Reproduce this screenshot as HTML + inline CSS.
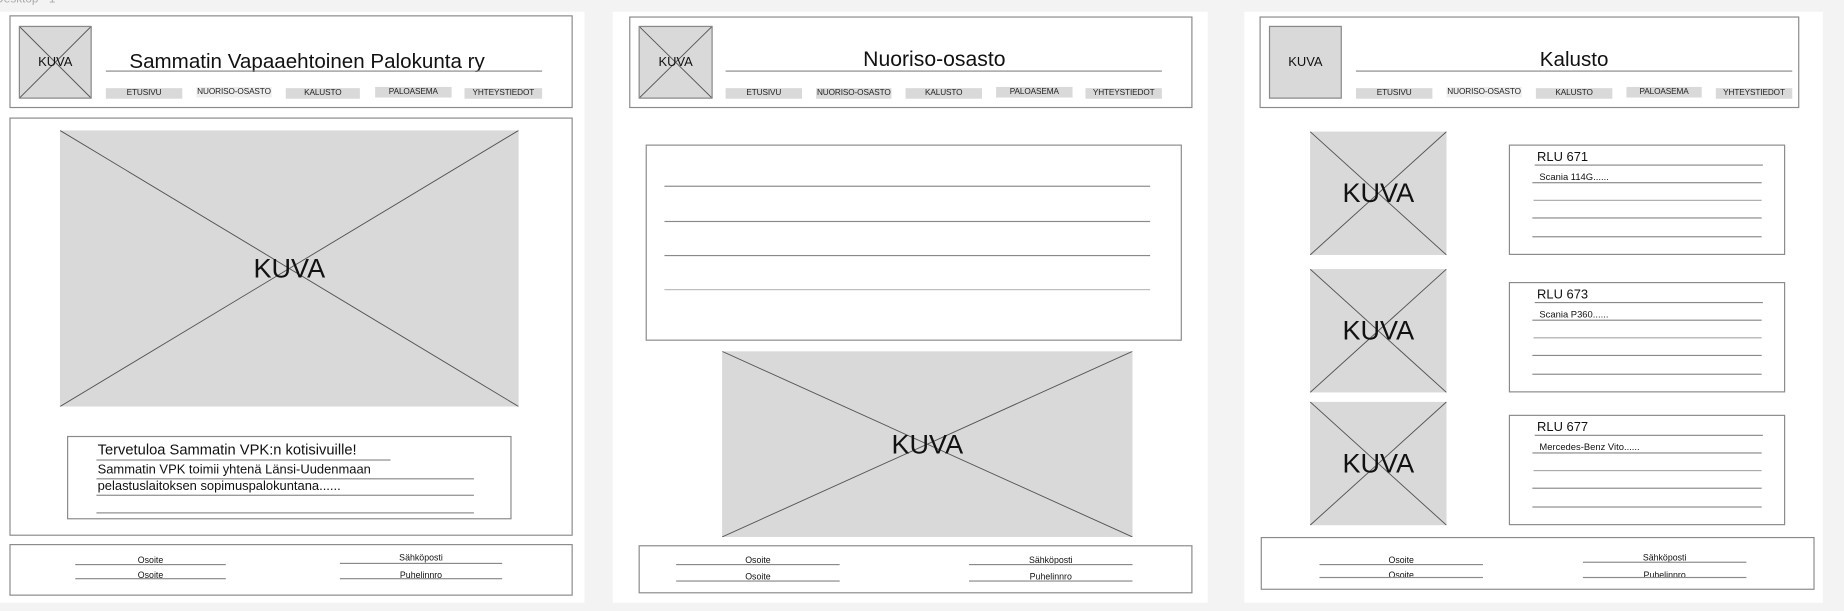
<!DOCTYPE html>
<html><head><meta charset="utf-8"><style>
html,body{margin:0;padding:0;background:#f3f3f3;overflow:hidden}
#s{position:absolute;left:0;top:0;width:1568px;height:520px;transform:scale(1.17602,1.175);transform-origin:0 0;font-family:"Liberation Sans",sans-serif;color:#111}
.a{position:absolute;box-sizing:border-box}
.w{background:#fff}
.b{border:1px solid #8a8a8a;background:#fff}
.img{background:#d9d9d9}
.img svg{position:absolute;left:0;top:0;width:100%;height:100%}
.c{display:flex;align-items:center;justify-content:center}
.nav{background:#d9d9d9;font-size:7px;color:#222;text-align:center;line-height:9px;height:9px;white-space:nowrap;overflow:visible;letter-spacing:-0.1px}
.ln{position:absolute;height:0;border-top:1px solid #8a8a8a}
.t{position:absolute;white-space:nowrap}
</style></head><body><div id="s">
<div class="t" style="left:-4px;top:-6px;font-size:10px;color:#aaa">Desktop - 1</div>

<!-- panel 1 -->
<div class="a w" style="left:0;top:10px;width:497px;height:503px"></div>
<div class="a b" style="left:8px;top:13px;width:479px;height:79px"></div>
<div class="a img c" style="left:16px;top:22px;width:62px;height:62px;border:1px solid #888;font-size:11px"><svg viewBox="0 0 10 10" preserveAspectRatio="none"><path d="M0 0L10 10M10 0L0 10" stroke="#555" stroke-width="0.8" vector-effect="non-scaling-stroke"/></svg><span style="position:relative">KUVA</span></div>
<div class="t" style="left:110px;top:42px;font-size:17.5px">Sammatin Vapaaehtoinen Palokunta ry</div>
<div class="ln" style="left:90px;top:60px;width:371px"></div>
<div class="a nav" style="left:90px;top:75px;width:65px">ETUSIVU</div>
<div class="a nav" style="left:167px;top:74px;width:64px;background:#eee">NUORISO-OSASTO</div>
<div class="a nav" style="left:243px;top:75px;width:63px">KALUSTO</div>
<div class="a nav" style="left:319px;top:74px;width:65px">PALOASEMA</div>
<div class="a nav" style="left:395px;top:75px;width:66px">YHTEYSTIEDOT</div>
<div class="a b" style="left:8px;top:100px;width:479px;height:356px"></div>
<div class="a img c" style="left:51px;top:111px;width:390px;height:235px;font-size:23px"><svg viewBox="0 0 10 10" preserveAspectRatio="none"><path d="M0 0L10 10M10 0L0 10" stroke="#555" stroke-width="0.8" vector-effect="non-scaling-stroke"/></svg><span style="position:relative">KUVA</span></div>
<div class="a b" style="left:57px;top:371px;width:378px;height:71px"></div>
<div class="t" style="left:83px;top:376px;font-size:12.5px">Tervetuloa Sammatin VPK:n kotisivuille!</div>
<div class="ln" style="left:82px;top:391px;width:250px"></div>
<div class="t" style="left:83px;top:394px;font-size:11px">Sammatin VPK toimii yhtenä Länsi-Uudenmaan</div>
<div class="ln" style="left:82px;top:407px;width:321px"></div>
<div class="t" style="left:83px;top:408px;font-size:11px">pelastuslaitoksen sopimuspalokuntana......</div>
<div class="ln" style="left:82px;top:421px;width:321px"></div>
<div class="ln" style="left:82px;top:436px;width:321px"></div>
<div class="a b" style="left:8px;top:463px;width:479px;height:44px"></div>
<div class="t" style="left:64px;top:472px;width:128px;text-align:center;font-size:7.5px">Osoite</div>
<div class="ln" style="left:64px;top:480px;width:128px"></div>
<div class="t" style="left:64px;top:485px;width:128px;text-align:center;font-size:7.5px">Osoite</div>
<div class="ln" style="left:64px;top:492px;width:128px"></div>
<div class="t" style="left:289px;top:470px;width:138px;text-align:center;font-size:7.5px">Sähköposti</div>
<div class="ln" style="left:289px;top:479px;width:138px"></div>
<div class="t" style="left:289px;top:485px;width:138px;text-align:center;font-size:7.5px">Puhelinnro</div>
<div class="ln" style="left:289px;top:492px;width:138px"></div>

<!-- panel 2 -->
<div class="a w" style="left:521px;top:10px;width:506px;height:503px"></div>
<div class="a b" style="left:535px;top:14px;width:479px;height:78px"></div>
<div class="a img c" style="left:543px;top:22px;width:63px;height:62px;border:1px solid #888;font-size:11px"><svg viewBox="0 0 10 10" preserveAspectRatio="none"><path d="M0 0L10 10M10 0L0 10" stroke="#555" stroke-width="0.8" vector-effect="non-scaling-stroke"/></svg><span style="position:relative">KUVA</span></div>
<div class="t" style="left:609px;top:40px;width:371px;text-align:center;font-size:18px">Nuoriso-osasto</div>
<div class="ln" style="left:617px;top:60px;width:371px"></div>
<div class="a nav" style="left:617px;top:75px;width:65px">ETUSIVU</div>
<div class="a nav" style="left:694px;top:75px;width:64px">NUORISO-OSASTO</div>
<div class="a nav" style="left:770px;top:75px;width:65px">KALUSTO</div>
<div class="a nav" style="left:847px;top:74px;width:65px">PALOASEMA</div>
<div class="a nav" style="left:923px;top:75px;width:65px">YHTEYSTIEDOT</div>
<div class="a b" style="left:549px;top:123px;width:456px;height:167px"></div>
<div class="ln" style="left:565px;top:158px;width:413px"></div>
<div class="ln" style="left:565px;top:188px;width:413px"></div>
<div class="ln" style="left:565px;top:217px;width:413px"></div>
<div class="ln" style="left:565px;top:246px;width:413px;border-color:#bbb"></div>
<div class="a img c" style="left:614px;top:299px;width:349px;height:158px;font-size:23px"><svg viewBox="0 0 10 10" preserveAspectRatio="none"><path d="M0 0L10 10M10 0L0 10" stroke="#555" stroke-width="0.8" vector-effect="non-scaling-stroke"/></svg><span style="position:relative">KUVA</span></div>
<div class="a b" style="left:543px;top:464px;width:471px;height:41px"></div>
<div class="t" style="left:575px;top:472px;width:139px;text-align:center;font-size:7.5px">Osoite</div>
<div class="ln" style="left:575px;top:480px;width:139px"></div>
<div class="t" style="left:575px;top:486px;width:139px;text-align:center;font-size:7.5px">Osoite</div>
<div class="ln" style="left:575px;top:494px;width:139px"></div>
<div class="t" style="left:824px;top:472px;width:139px;text-align:center;font-size:7.5px">Sähköposti</div>
<div class="ln" style="left:824px;top:480px;width:139px"></div>
<div class="t" style="left:824px;top:486px;width:139px;text-align:center;font-size:7.5px">Puhelinnro</div>
<div class="ln" style="left:824px;top:494px;width:139px"></div>

<!-- panel 3 -->
<div class="a w" style="left:1058px;top:10px;width:492px;height:503px"></div>
<div class="a b" style="left:1071px;top:14px;width:459px;height:78px"></div>
<div class="a img c" style="left:1079px;top:22px;width:62px;height:62px;border:1px solid #888;font-size:11px">KUVA</div>
<div class="t" style="left:1153px;top:40px;width:371px;text-align:center;font-size:17.5px">Kalusto</div>
<div class="ln" style="left:1153px;top:60px;width:371px"></div>
<div class="a nav" style="left:1153px;top:75px;width:65px">ETUSIVU</div>
<div class="a nav" style="left:1230px;top:74px;width:64px;background:#eee">NUORISO-OSASTO</div>
<div class="a nav" style="left:1306px;top:75px;width:65px">KALUSTO</div>
<div class="a nav" style="left:1383px;top:74px;width:64px">PALOASEMA</div>
<div class="a nav" style="left:1459px;top:75px;width:65px">YHTEYSTIEDOT</div>

<div class="a img c" style="left:1114px;top:112px;width:116px;height:105px;font-size:23px"><svg viewBox="0 0 10 10" preserveAspectRatio="none"><path d="M0 0L10 10M10 0L0 10" stroke="#555" stroke-width="0.8" vector-effect="non-scaling-stroke"/></svg><span style="position:relative">KUVA</span></div>
<div class="a img c" style="left:1114px;top:229px;width:116px;height:105px;font-size:23px"><svg viewBox="0 0 10 10" preserveAspectRatio="none"><path d="M0 0L10 10M10 0L0 10" stroke="#555" stroke-width="0.8" vector-effect="non-scaling-stroke"/></svg><span style="position:relative">KUVA</span></div>
<div class="a img c" style="left:1114px;top:342px;width:116px;height:105px;font-size:23px"><svg viewBox="0 0 10 10" preserveAspectRatio="none"><path d="M0 0L10 10M10 0L0 10" stroke="#555" stroke-width="0.8" vector-effect="non-scaling-stroke"/></svg><span style="position:relative">KUVA</span></div>

<div class="a b" style="left:1283px;top:123px;width:235px;height:94px"></div>
<div class="t" style="left:1307px;top:128px;font-size:11px">RLU 671</div>
<div class="ln" style="left:1305px;top:140px;width:194px"></div>
<div class="t" style="left:1309px;top:146px;font-size:8px">Scania 114G......</div>
<div class="ln" style="left:1303px;top:155px;width:195px"></div>
<div class="ln" style="left:1304px;top:170px;width:194px;border-color:#aaa"></div>
<div class="ln" style="left:1303px;top:185px;width:195px"></div>
<div class="ln" style="left:1303px;top:201px;width:195px"></div>

<div class="a b" style="left:1283px;top:240px;width:235px;height:94px"></div>
<div class="t" style="left:1307px;top:245px;font-size:11px">RLU 673</div>
<div class="ln" style="left:1305px;top:257px;width:194px"></div>
<div class="t" style="left:1309px;top:263px;font-size:8px">Scania P360......</div>
<div class="ln" style="left:1303px;top:272px;width:195px"></div>
<div class="ln" style="left:1304px;top:287px;width:194px;border-color:#aaa"></div>
<div class="ln" style="left:1303px;top:302px;width:195px"></div>
<div class="ln" style="left:1303px;top:318px;width:195px"></div>

<div class="a b" style="left:1283px;top:353px;width:235px;height:94px"></div>
<div class="t" style="left:1307px;top:358px;font-size:11px">RLU 677</div>
<div class="ln" style="left:1305px;top:370px;width:194px"></div>
<div class="t" style="left:1309px;top:376px;font-size:8px">Mercedes-Benz Vito......</div>
<div class="ln" style="left:1303px;top:385px;width:195px"></div>
<div class="ln" style="left:1304px;top:400px;width:194px;border-color:#aaa"></div>
<div class="ln" style="left:1303px;top:415px;width:195px"></div>
<div class="ln" style="left:1303px;top:431px;width:195px"></div>

<div class="a b" style="left:1072px;top:457px;width:471px;height:45px"></div>
<div class="t" style="left:1122px;top:472px;width:139px;text-align:center;font-size:7.5px">Osoite</div>
<div class="ln" style="left:1122px;top:480px;width:139px"></div>
<div class="t" style="left:1122px;top:485px;width:139px;text-align:center;font-size:7.5px">Osoite</div>
<div class="ln" style="left:1122px;top:491px;width:139px"></div>
<div class="t" style="left:1346px;top:470px;width:139px;text-align:center;font-size:7.5px">Sähköposti</div>
<div class="ln" style="left:1346px;top:478px;width:139px"></div>
<div class="t" style="left:1346px;top:485px;width:139px;text-align:center;font-size:7.5px">Puhelinnro</div>
<div class="ln" style="left:1346px;top:491px;width:139px"></div>
</div></body></html>
